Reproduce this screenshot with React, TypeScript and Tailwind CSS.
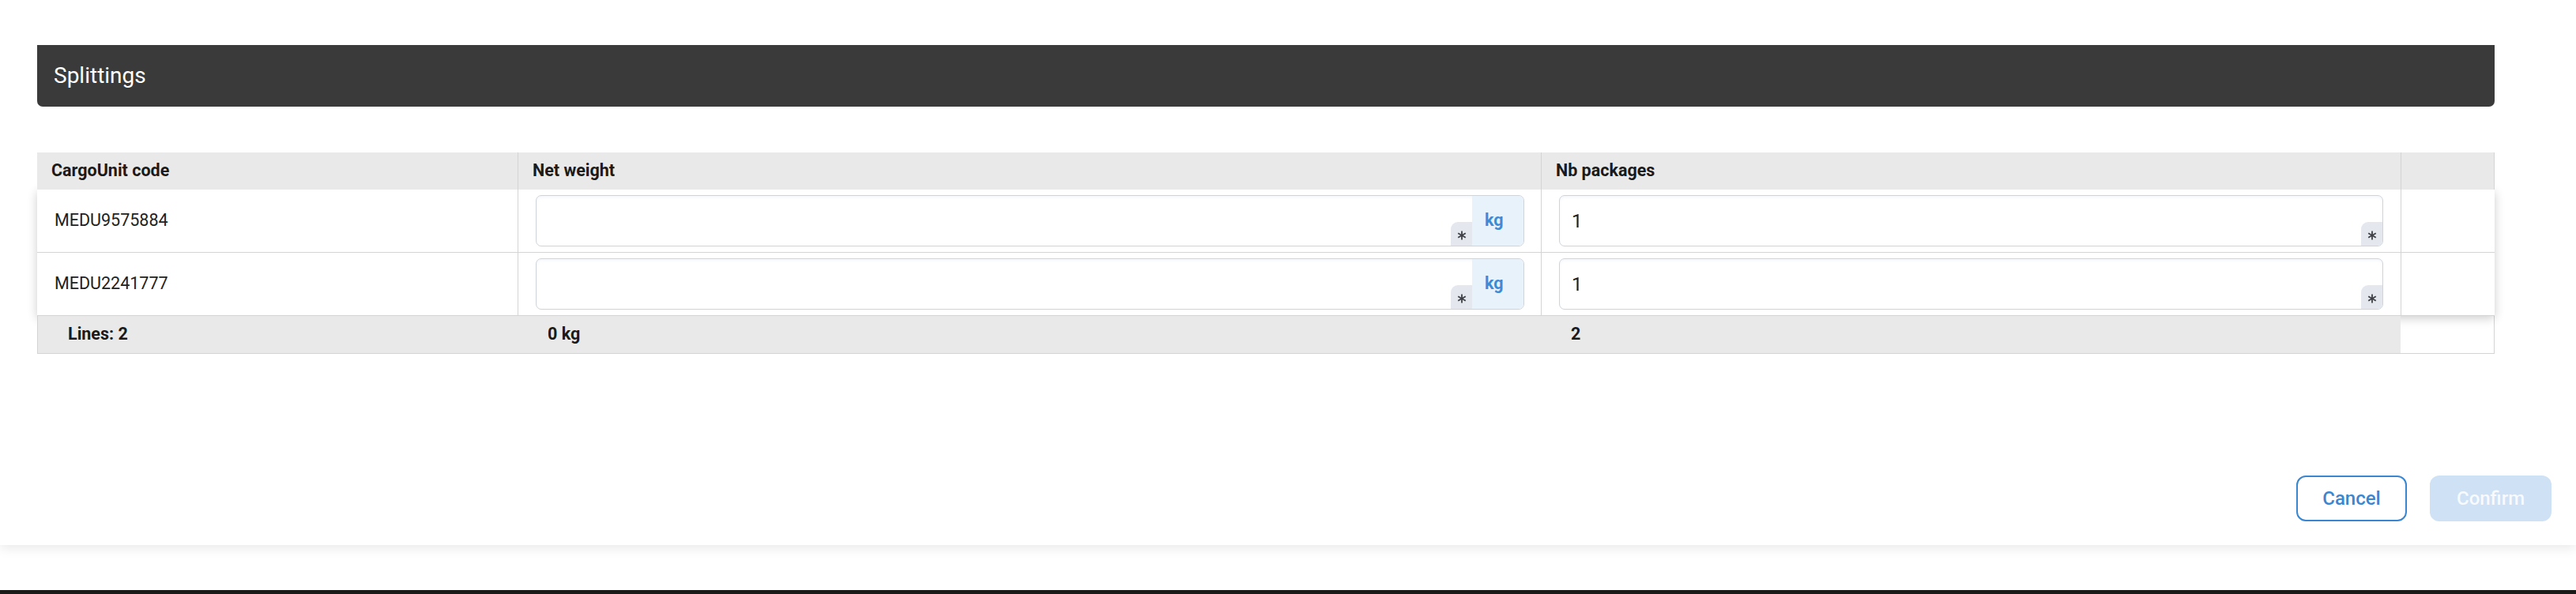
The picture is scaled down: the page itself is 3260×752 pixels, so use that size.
import React from "react";

function Asterisk() {
  return (
    <svg width="12" height="12" viewBox="0 0 12 12" className="block">
      <g stroke="#3f3f46" strokeWidth="1.8" strokeLinecap="butt">
        <line x1="6" y1="0.5" x2="6" y2="11.5" />
        <line x1="1.2" y1="3.2" x2="10.8" y2="8.8" />
        <line x1="1.2" y1="8.8" x2="10.8" y2="3.2" />
      </g>
    </svg>
  );
}

function Field({ value, unit }: { value?: string; unit?: string }) {
  return (
    <div className="flex h-[65px] w-full rounded-[7px] border border-[#cfd3da] overflow-hidden bg-white shadow-[inset_0_2px_3px_rgba(60,110,180,0.06)]">
      <div className="flex-1 flex items-center pl-[15px] text-[24px] text-[#222]">{value}</div>
      <div className="self-end w-[27px] h-[30px] bg-[#e4e7ee] rounded-tl-[9px] flex items-center justify-center pt-[3px]">
        <Asterisk />
      </div>
      {unit && (
        <div className="w-[65px] bg-[#e8f2fa] flex items-center pl-[16px] text-[#3d8bd4] font-bold text-[21.5px]">
          {unit}
        </div>
      )}
    </div>
  );
}

const rows = ["MEDU9575884", "MEDU2241777"];

export default function App() {
  return (
    <div className="w-[3260px] h-[752px] bg-white flex flex-col font-['Roboto',sans-serif] overflow-hidden">
      <div className="relative z-10 h-[690px] bg-white shadow-[0_4px_14px_rgba(0,0,0,0.09)] flex flex-col pt-[57px]">
        <div className="ml-[47px] w-[3110px] h-[78px] bg-[#3a3a3a] rounded-b-[7px] flex items-center pl-[21px] text-white text-[28px]">
          Splittings
        </div>

        <div className="ml-[47px] mt-[58px] w-[3110px] text-[21.5px]">
          {/* Header */}
          <div className="relative z-10 flex h-[47px] bg-[#e9e9e9] border-r border-[#d4d4d4] font-bold text-[#1a1a1a]">
            <div className="w-[608px] flex items-center pl-[18px]">CargoUnit code</div>
            <div className="w-[1295px] flex items-center pl-[18px] border-l border-[#d4d4d4]">Net weight</div>
            <div className="w-[1088px] flex items-center pl-[18px] border-l border-[#d4d4d4]">Nb packages</div>
            <div className="flex-1 border-l border-[#d4d4d4]" />
          </div>

          {/* Body */}
          <div className="relative z-0 bg-white shadow-[0_3px_12px_rgba(0,0,0,0.2)]">
            {rows.map((code) => (
              <div key={code} className="flex h-[80px] border-b border-[#d4d4d4]">
                <div className="w-[608px] flex items-center pl-[22px] text-[#222]">{code}</div>
                <div className="w-[1295px] flex items-center pl-[22px] pr-[21px] border-l border-[#d4d4d4]">
                  <Field unit="kg" />
                </div>
                <div className="w-[1088px] flex items-center pl-[22px] pr-[22px] border-l border-[#d4d4d4]">
                  <Field value="1" />
                </div>
                <div className="flex-1 border-l border-[#d4d4d4]" />
              </div>
            ))}
          </div>

          {/* Footer */}
          <div className="flex h-[48px] font-bold text-[#1a1a1a]">
            <div className="relative z-10 flex bg-[#e9e9e9] border-l border-b border-[#d4d4d4]">
              <div className="w-[607px] flex items-center pl-[38px]">Lines: 2</div>
              <div className="w-[1295px] flex items-center pl-[38px]">0 kg</div>
              <div className="w-[1088px] flex items-center pl-[38px]">2</div>
            </div>
            <div className="flex-1 border-r border-b border-[#d4d4d4]" />
          </div>
        </div>

        <div className="flex-1" />

        <div className="flex justify-end gap-[29px] pr-[31px] pb-[30px]">
          <button className="w-[140px] h-[58px] rounded-[12px] border-2 border-[#3a86d0] text-[#3a86d0] text-[24px] font-medium bg-white">
            Cancel
          </button>
          <button className="w-[154px] h-[58px] rounded-[12px] bg-[#cfe1f4] text-[#f7fafe] text-[24px] font-medium">
            Confirm
          </button>
        </div>
      </div>
      <div className="flex-1 bg-white" />
      <div className="h-[5px] bg-[#1a1a18]" />
    </div>
  );
}
